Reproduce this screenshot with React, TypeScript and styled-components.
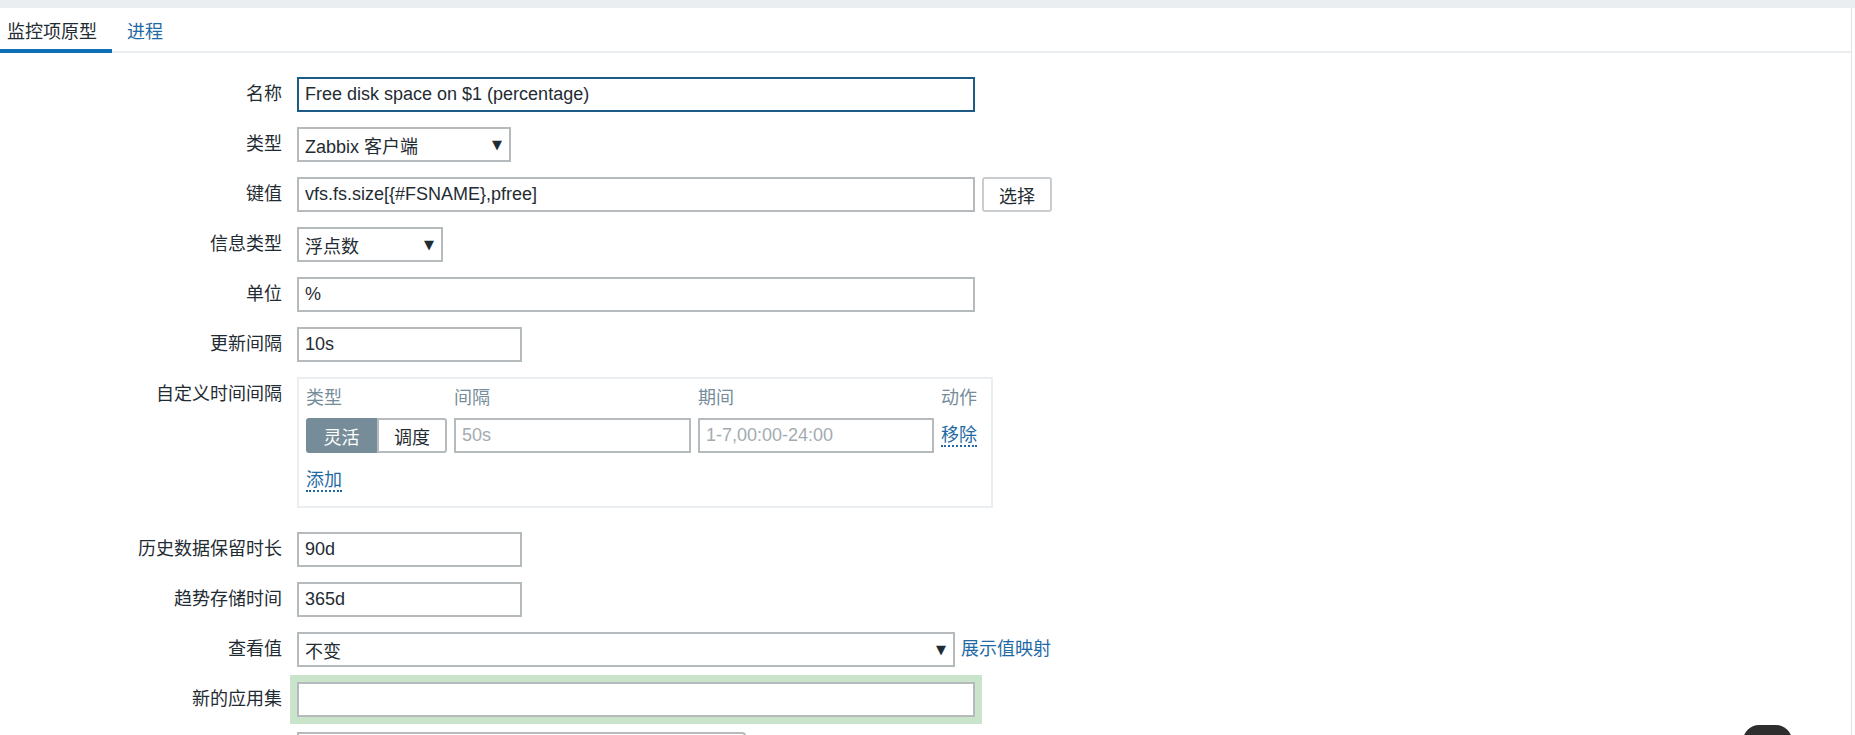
import styled, { createGlobalStyle } from "styled-components";

const FONT = `"Liberation Sans", Arial, "Noto Sans CJK SC", sans-serif`;

const GlobalStyle = createGlobalStyle`
  html, body {
    margin: 0;
    padding: 0;
    background: #ffffff;
    overflow: hidden;
  }
  body {
    font-family: ${FONT};
    font-size: 18px;
    color: #1f2c33;
  }
`;

const Page = styled.div`
  min-height: 735px;
  display: flex;
  flex-direction: column;
`;

const TopStrip = styled.div`
  height: 8px;
  flex-shrink: 0;
  background: #ebeef0;
`;

const Panel = styled.div`
  flex: 1;
  width: 1852px;
  box-sizing: border-box;
  border-right: 1px solid #dfe3e6;
  background: #ffffff;
`;

const TabList = styled.ul`
  list-style: none;
  margin: 0;
  padding: 0;
  height: 45px;
  box-sizing: border-box;
  display: flex;
  border-bottom: 2px solid #ebeef0;
`;

const Tab = styled.li<{ $active?: boolean }>`
  height: 45px;
  box-sizing: border-box;
  margin-bottom: -2px;
  padding: 2px 15px 0;
  display: flex;
  align-items: center;
  font-size: 18px;
  color: ${(p) => (p.$active ? "#1f2c33" : "#1f6aa5")};
  border-bottom: 4px solid ${(p) => (p.$active ? "#0f6fb4" : "transparent")};

  &:first-child {
    padding-left: 7px;
  }
`;

const Form = styled.div`
  padding-top: 24px;
`;

const Row = styled.div<{ $after?: number }>`
  display: grid;
  grid-template-columns: 282px auto;
  column-gap: 15px;
  align-items: start;
  margin-bottom: ${(p) => p.$after ?? 15}px;
`;

const Label = styled.label`
  text-align: right;
  line-height: 35px;
  white-space: nowrap;
  color: #1f2c33;
`;

const Field = styled.div<{ $gap?: number }>`
  display: flex;
  align-items: center;
  gap: ${(p) => p.$gap ?? 7}px;
`;

const TextInput = styled.input<{ $w: number; $focused?: boolean; $highlight?: boolean }>`
  width: ${(p) => p.$w}px;
  height: 35px;
  box-sizing: border-box;
  margin: 0;
  padding: 0 6px;
  font-family: ${FONT};
  font-size: 18px;
  color: #1f2c33;
  background: #ffffff;
  border: 2px solid ${(p) => (p.$focused ? "#1c5b85" : "#b5babd")};
  border-radius: 0;
  outline: none;
  box-shadow: ${(p) => (p.$highlight ? "0 0 0 7px #cae4cb" : "none")};

  &::placeholder {
    color: #a3abb0;
  }
`;

const Select = styled.div<{ $w: number }>`
  width: ${(p) => p.$w}px;
  height: 35px;
  box-sizing: border-box;
  padding: 0 7px 0 6px;
  display: flex;
  align-items: center;
  justify-content: space-between;
  border: 2px solid #b5babd;
  background: #ffffff;
  color: #1f2c33;
  white-space: nowrap;
`;

const Arrow = styled.span`
  font-size: 13px;
  color: #1f2c33;
  font-family: "DejaVu Sans", sans-serif;
`;

const Button = styled.button`
  width: 70px;
  height: 35px;
  box-sizing: border-box;
  padding: 0;
  font-family: ${FONT};
  font-size: 18px;
  color: #1f2c33;
  background: #ffffff;
  border: 2px solid #c9cdd0;
  border-radius: 3px;
`;

const Link = styled.a<{ $dotted?: boolean }>`
  color: #1f6aa5;
  text-decoration: none;
  white-space: nowrap;
  cursor: pointer;
  border-bottom: ${(p) => (p.$dotted ? "2px dotted #1f6aa5" : "none")};
  line-height: 1.15;
`;

const IntervalBox = styled.div`
  width: 696px;
  box-sizing: border-box;
  border: 2px solid #ebeef0;
  padding: 6px 7px 11px;
`;

const IntervalGrid = styled.div`
  display: grid;
  grid-template-columns: 141px 237px 236px auto;
  column-gap: 7px;
  row-gap: 7px;
  align-items: center;
`;

const HeadCell = styled.div`
  line-height: 26px;
  color: #768d99;
`;

const Segmented = styled.div`
  display: flex;
  height: 35px;
`;

const Segment = styled.div<{ $active?: boolean; $w: number }>`
  width: ${(p) => p.$w}px;
  box-sizing: border-box;
  display: flex;
  align-items: center;
  justify-content: center;
  background: ${(p) => (p.$active ? "#768d99" : "#ffffff")};
  color: ${(p) => (p.$active ? "#ffffff" : "#1f2c33")};
  border: 2px solid ${(p) => (p.$active ? "#768d99" : "#b5babd")};
  border-radius: ${(p) => (p.$active ? "3px 0 0 3px" : "0 3px 3px 0")};
`;

const AddLine = styled.div`
  margin-top: 12px;
  line-height: 30px;
`;

const ListBox = styled.div`
  width: 449px;
  height: 90px;
  box-sizing: border-box;
  border: 2px solid #b5babd;
  border-radius: 0 4px 0 0;
`;

const FloatButton = styled.div`
  position: fixed;
  left: 1743px;
  top: 725px;
  width: 49px;
  height: 36px;
  border-radius: 16px;
  background: #2e2e2e;
`;

export default function App() {
  return (
    <>
      <GlobalStyle />
      <Page>
        <TopStrip />
        <Panel>
          <TabList>
            <Tab $active>监控项原型</Tab>
            <Tab>进程</Tab>
          </TabList>

          <Form>
            <Row>
              <Label>名称</Label>
              <Field>
                <TextInput $w={678} $focused defaultValue="Free disk space on $1 (percentage)" />
              </Field>
            </Row>

            <Row>
              <Label>类型</Label>
              <Field>
                <Select $w={214}>
                  <span>Zabbix 客户端</span>
                  <Arrow>▼</Arrow>
                </Select>
              </Field>
            </Row>

            <Row>
              <Label>键值</Label>
              <Field>
                <TextInput $w={678} defaultValue="vfs.fs.size[{#FSNAME},pfree]" />
                <Button>选择</Button>
              </Field>
            </Row>

            <Row>
              <Label>信息类型</Label>
              <Field>
                <Select $w={146}>
                  <span>浮点数</span>
                  <Arrow>▼</Arrow>
                </Select>
              </Field>
            </Row>

            <Row>
              <Label>单位</Label>
              <Field>
                <TextInput $w={678} defaultValue="%" />
              </Field>
            </Row>

            <Row>
              <Label>更新间隔</Label>
              <Field>
                <TextInput $w={225} defaultValue="10s" />
              </Field>
            </Row>

            <Row $after={24}>
              <Label>自定义时间间隔</Label>
              <IntervalBox>
                <IntervalGrid>
                  <HeadCell>类型</HeadCell>
                  <HeadCell>间隔</HeadCell>
                  <HeadCell>期间</HeadCell>
                  <HeadCell>动作</HeadCell>

                  <Segmented>
                    <Segment $active $w={71}>灵活</Segment>
                    <Segment $w={70}>调度</Segment>
                  </Segmented>
                  <TextInput $w={237} placeholder="50s" />
                  <TextInput $w={236} placeholder="1-7,00:00-24:00" />
                  <div>
                    <Link $dotted>移除</Link>
                  </div>
                </IntervalGrid>
                <AddLine>
                  <Link $dotted>添加</Link>
                </AddLine>
              </IntervalBox>
            </Row>

            <Row>
              <Label>历史数据保留时长</Label>
              <Field>
                <TextInput $w={225} defaultValue="90d" />
              </Field>
            </Row>

            <Row>
              <Label>趋势存储时间</Label>
              <Field>
                <TextInput $w={225} defaultValue="365d" />
              </Field>
            </Row>

            <Row>
              <Label>查看值</Label>
              <Field $gap={6}>
                <Select $w={658}>
                  <span>不变</span>
                  <Arrow>▼</Arrow>
                </Select>
                <Link>展示值映射</Link>
              </Field>
            </Row>

            <Row>
              <Label>新的应用集</Label>
              <Field>
                <TextInput $w={678} $highlight />
              </Field>
            </Row>

            <Row>
              <Label />
              <ListBox />
            </Row>
          </Form>
        </Panel>
        <FloatButton />
      </Page>
    </>
  );
}
